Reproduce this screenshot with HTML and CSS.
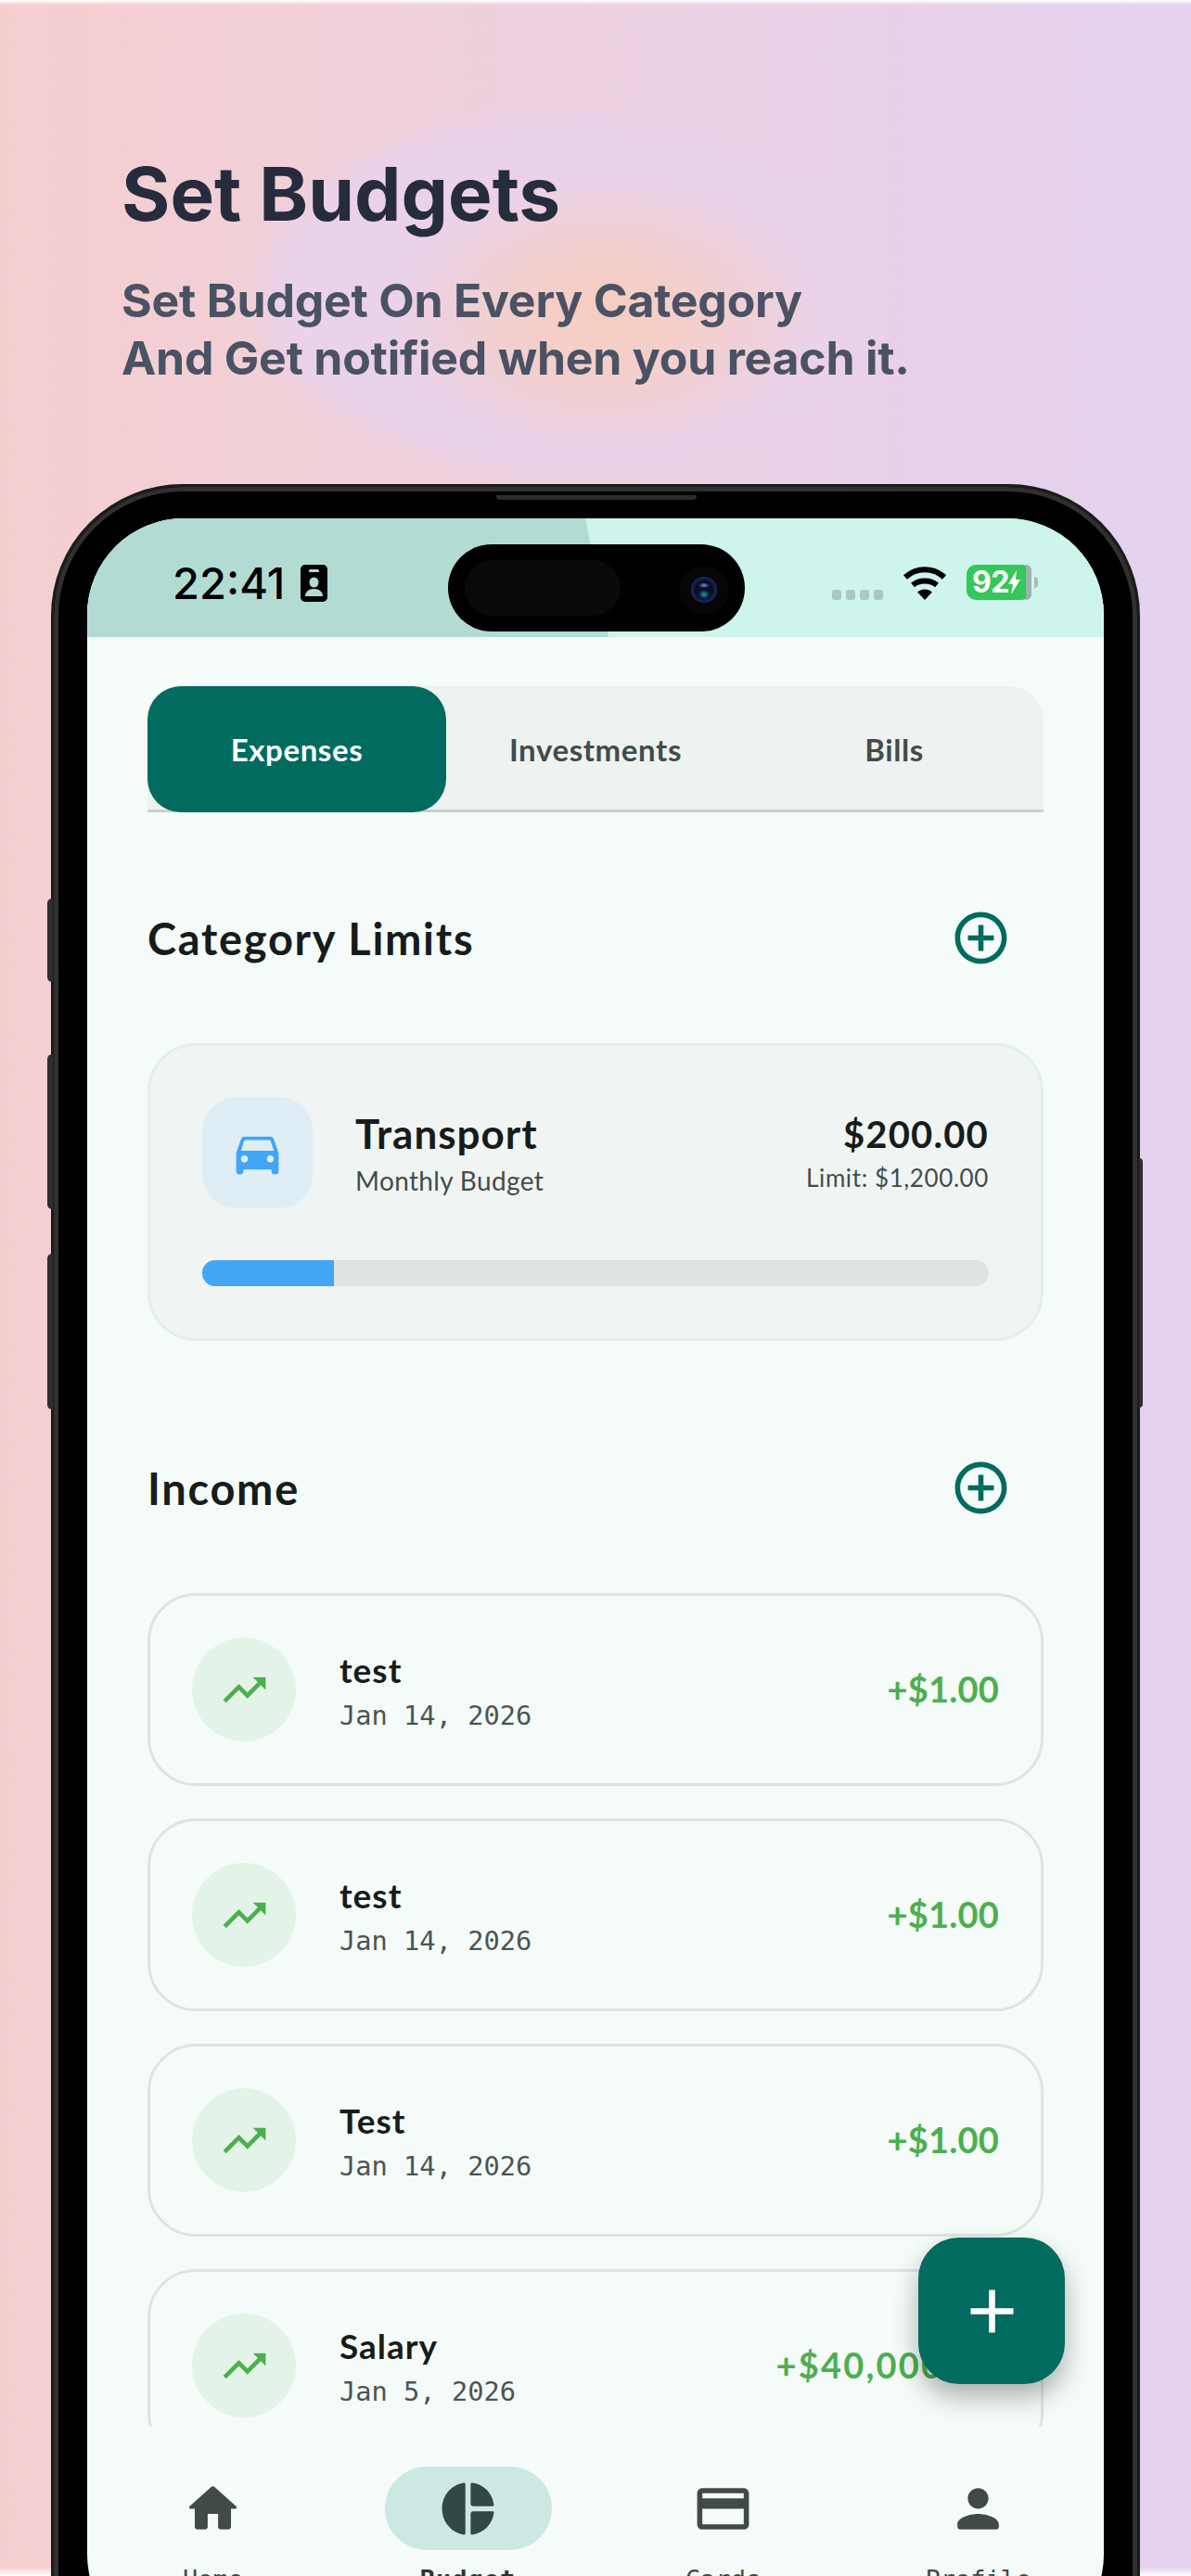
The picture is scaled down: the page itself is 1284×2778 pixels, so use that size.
FILE: index.html
```html
<!DOCTYPE html>
<html lang="en">
<head>
<meta charset="utf-8">
<title>Set Budgets</title>
<link rel="stylesheet" href="styles.css">
</head>
<body>
<div class="blob"></div>
<header class="hero">
  <h1 class="hero-title">Set Budgets</h1>
  <p class="hero-sub">Set Budget On Every Category<br>And Get notified when you reach it.</p>
</header>
<div class="phone">
  <span class="btn btn-a"></span><span class="btn btn-b"></span><span class="btn btn-c"></span><span class="btn btn-d"></span>
  <span class="speaker"></span>
  <div class="screen">
    <div class="status">
      <div class="status-shade"></div>
      <div class="status-left">
        <span class="time">22:41</span>
        <svg class="badge-ico" viewBox="0 0 29 40"><rect width="29" height="40" rx="5" fill="#000"/><rect x="9" y="5" width="11" height="3" rx="1.5" fill="#b2dbd3"/><ellipse cx="14.5" cy="19" rx="5" ry="5.5" fill="#b2dbd3"/><path d="M5 34c0-5 4-8 9.500-8s9.500 3 9.500 8z" fill="#b2dbd3"/></svg>
      </div>
      <div class="island"><span class="island-pill"></span><span class="cam"><span class="lens"></span></span></div>
      <div class="status-right">
        <span class="dots"><i></i><i></i><i></i><i></i></span>
        <svg class="wifi" viewBox="0 0 48 36"><path d="M3 11.500C15 .5 33 .5 45 11.500" fill="none" stroke="#000" stroke-width="6"/><path d="M11 20C18 14 30 14 37 20" fill="none" stroke="#000" stroke-width="6"/><path d="M16 27.500C21 23.500 27 23.500 32 27.500L24 36z" fill="#000"/></svg>
        <span class="battery"><span class="batt-text">92</span><svg class="bolt" viewBox="0 0 14 26"><path d="M9 0L0 15h5l-2 11 10-16H8z" fill="#fff"/></svg><span class="batt-end"></span><span class="batt-nub"></span></span>
      </div>
    </div>
    <main class="main">
      <nav class="tabs">
        <div class="tab tab-on">Expenses</div>
        <div class="tab">Investments</div>
        <div class="tab">Bills</div>
      </nav>
      <section class="sec-head sec-first">
        <h2 class="sec-title">Category Limits</h2>
        <svg class="plus-ico" viewBox="0 0 24 24"><path d="M13 7h-2v4H7v2h4v4h2v-4h4v-2h-4V7zm-1-5C6.480 2 2 6.480 2 12s4.480 10 10 10 10-4.480 10-10S17.520 2 12 2zm0 18c-4.410 0-8-3.590-8-8s3.590-8 8-8 8 3.590 8 8-3.590 8-8 8z"/></svg>
      </section>
      <article class="limit">
        <div class="limit-top">
          <div class="limit-ico"><svg class="car" viewBox="0 0 24 24"><path d="M18.920 6.010C18.720 5.420 18.160 5 17.500 5h-11c-.66 0-1.210.42-1.420 1.010L3 12v8c0 .55.45 1 1 1h1c.55 0 1-.45 1-1v-1h12v1c0 .55.45 1 1 1h1c.55 0 1-.45 1-1v-8l-2.080-5.990zM6.500 16c-.83 0-1.500-.67-1.500-1.500S5.670 13 6.500 13s1.500.67 1.500 1.500S7.330 16 6.500 16zm11 0c-.83 0-1.500-.67-1.500-1.500s.67-1.500 1.500-1.500 1.500.67 1.500 1.500-.67 1.500-1.500 1.500zM5 11l1.500-4.500h11L19 11H5z"/></svg></div>
          <div class="limit-info"><div class="limit-name">Transport</div><div class="limit-sub">Monthly Budget</div></div>
          <div class="limit-nums"><div class="limit-amt">$200.00</div><div class="limit-cap">Limit: $1,200.00</div></div>
        </div>
        <div class="bar"><div class="bar-fill" style="width:16.700%"></div></div>
      </article>
      <section class="sec-head sec-next">
        <h2 class="sec-title">Income</h2>
        <svg class="plus-ico" viewBox="0 0 24 24"><path d="M13 7h-2v4H7v2h4v4h2v-4h4v-2h-4V7zm-1-5C6.480 2 2 6.480 2 12s4.480 10 10 10 10-4.480 10-10S17.520 2 12 2zm0 18c-4.410 0-8-3.590-8-8s3.590-8 8-8 8 3.590 8 8-3.590 8-8 8z"/></svg>
      </section>
      <div class="rows">
        <article class="row">
          <div class="row-ico"><svg class="trend" viewBox="0 0 24 24"><path d="M16 6l2.290 2.290-4.880 4.880-4-4L2 16.590 3.410 18l6-6 4 4 6.300-6.290L22 12V6z"/></svg></div>
          <div class="row-info"><div class="row-name">test</div><div class="row-date">Jan 14, 2026</div></div>
          <div class="row-amt">+$1.00</div>
        </article>
        <article class="row">
          <div class="row-ico"><svg class="trend" viewBox="0 0 24 24"><path d="M16 6l2.290 2.290-4.880 4.880-4-4L2 16.590 3.410 18l6-6 4 4 6.300-6.290L22 12V6z"/></svg></div>
          <div class="row-info"><div class="row-name">test</div><div class="row-date">Jan 14, 2026</div></div>
          <div class="row-amt">+$1.00</div>
        </article>
        <article class="row">
          <div class="row-ico"><svg class="trend" viewBox="0 0 24 24"><path d="M16 6l2.290 2.290-4.880 4.880-4-4L2 16.590 3.410 18l6-6 4 4 6.300-6.290L22 12V6z"/></svg></div>
          <div class="row-info"><div class="row-name">Test</div><div class="row-date">Jan 14, 2026</div></div>
          <div class="row-amt">+$1.00</div>
        </article>
        <article class="row">
          <div class="row-ico"><svg class="trend" viewBox="0 0 24 24"><path d="M16 6l2.290 2.290-4.880 4.880-4-4L2 16.590 3.410 18l6-6 4 4 6.300-6.290L22 12V6z"/></svg></div>
          <div class="row-info"><div class="row-name">Salary</div><div class="row-date">Jan 5, 2026</div></div>
          <div class="row-amt row-amt-wide">+$40,000.00</div>
        </article>
      </div>
    </main>
    <button class="fab" type="button" aria-label="Add"><svg class="fab-ico" viewBox="0 0 24 24"><path d="M19 13h-6v6h-2v-6H5v-2h6V5h2v6h6v2z"/></svg></button>
    <nav class="bottom">
      <div class="nav-item"><span class="nav-slot"><svg class="nav-ico" viewBox="0 0 24 24"><path d="M10 19v-5h4v5c0 .55.45 1 1 1h3c.55 0 1-.45 1-1v-7h1.700c.46 0 .68-.57.33-.87L12.670 3.600c-.38-.34-.96-.34-1.340 0l-8.360 7.530c-.34.3-.13.87.33.87H5v7c0 .55.45 1 1 1h3c.55 0 1-.45 1-1z"/></svg></span><span class="nav-label">Home</span></div>
      <div class="nav-item nav-on"><span class="nav-slot"><svg class="nav-ico" viewBox="0 0 24 24"><path d="M11 2.500v19c0 .3-.25.55-.55.5C5.650 21.300 2 17.100 2 12s3.650-9.300 8.450-10c.3-.05.55.2.55.5zm2.030 0V10c0 .55.45 1 1 1H21.500c.3 0 .55-.25.5-.55-.5-4.500-4-8-8.420-8.450-.3-.05-.55.2-.55.5zm0 11V21.500c0 .3.25.55.55.5 4.450-.5 7.950-4 8.420-8.450.05-.3-.2-.55-.5-.55h-7.470c-.55 0-1 .45-1 1z"/></svg></span><span class="nav-label">Budget</span></div>
      <div class="nav-item"><span class="nav-slot"><svg class="nav-ico" viewBox="0 0 24 24"><path d="M20 4H4c-1.110 0-1.990.89-1.990 2L2 18c0 1.110.89 2 2 2h16c1.110 0 2-.89 2-2V6c0-1.110-.89-2-2-2zm0 14H4v-6h16v6zm0-10H4V6h16v2z"/></svg></span><span class="nav-label">Cards</span></div>
      <div class="nav-item"><span class="nav-slot"><svg class="nav-ico" viewBox="0 0 24 24"><path d="M12 12c2.210 0 4-1.790 4-4s-1.790-4-4-4-4 1.790-4 4 1.790 4 4 4zm0 2c-2.670 0-8 1.340-8 4v1c0 .55.45 1 1 1h14c.55 0 1-.45 1-1v-1c0-2.660-5.330-4-8-4z"/></svg></span><span class="nav-label">Profile</span></div>
    </nav>
  </div>
</div>
</body>
</html>
```

FILE: styles.css
```css
* { box-sizing: border-box; }
html, body { margin: 0; padding: 0; }
body {
  width: 1284px;
  height: 2778px;
  overflow: hidden;
  position: relative;
  font-family: "Lato", "Noto Sans", sans-serif;
  background:
    linear-gradient(180deg, #fff 0, rgba(255,255,255,0) 5px),
    linear-gradient(0deg, #fff 0, rgba(255,255,255,0) 10px),
    linear-gradient(90deg, #f5cfd0 0%, #e4d2f0 100%);
}
.blob {
  position: absolute;
  left: 262px;
  top: 112px;
  width: 700px;
  height: 408px;
  background:
    radial-gradient(ellipse 230px 150px at 56% 56%, #f7cdbf 0%, #f3cfcd 45%, rgba(235,210,228,0) 100%),
    radial-gradient(ellipse closest-side at 50% 50%, #ead2e8 0%, #ead2e8 88%, rgba(234,210,232,0) 100%);
}
.hero { position: relative; height: 522px; padding: 161px 0 0 131px; }
.hero-title { margin: 0; font: 700 80px/96px "Inter", sans-serif; color: #272c3c; }
.hero-sub { margin: 36px 0 0; font: 700 50px/62px "Inter", sans-serif; color: #4a5264; letter-spacing: -0.25px; }

.phone {
  position: relative;
  width: 1174px;
  height: 2400px;
  margin-left: 55px;
  border-radius: 142px;
  background: #000;
  border: 3px solid #1c1c1c;
  box-shadow: inset 0 0 0 5px #303030;
  padding: 34px 36px 0;
}
.btn { position: absolute; width: 6px; background: #2e2e2e; }
.btn-a { left: -7px; top: 444px; height: 90px; border-radius: 5px 0 0 5px; }
.btn-b { left: -7px; top: 612px; height: 167px; border-radius: 5px 0 0 5px; }
.btn-c { left: -7px; top: 827px; height: 168px; border-radius: 5px 0 0 5px; }
.btn-d { right: -6px; top: 724px; height: 269px; width: 4px; border-radius: 0 5px 5px 0; }
.speaker { position: absolute; left: 477px; top: 9px; width: 216px; height: 5px; background: #2c2c2c; border-radius: 0 0 4px 4px; }
.screen {
  position: relative;
  width: 1096px;
  height: 2300px;
  background: #f5fbf8;
  border-radius: 104px;
  overflow: hidden;
}
.status { position: relative; height: 128px; background: #cdf5ec; }
.status-shade { position: absolute; inset: 0; background: #b2dbd3; clip-path: polygon(0 0, 537px 0, 562px 128px, 0 128px); }
.status-left { position: absolute; left: 92px; top: 48px; display: flex; align-items: center; gap: 17px; }
.time { font: 500 47px/44px "Inter", sans-serif; color: #000; }
.badge-ico { width: 29px; height: 40px; }
.island { position: absolute; left: 389px; top: 28px; width: 320px; height: 94px; border-radius: 47px; background: #000; }
.island-pill { position: absolute; left: 18px; top: 17px; width: 168px; height: 60px; border-radius: 30px; background: #0a0a0a; }
.cam { position: absolute; left: 249px; top: 23px; width: 54px; height: 52px; border-radius: 50%; background: #07040a; }
.lens {
  position: absolute;
  left: 13px;
  top: 12px;
  width: 28px;
  height: 28px;
  border-radius: 50%;
  background:
    radial-gradient(6px 3px at 50% 33%, #8a86e0, transparent),
    radial-gradient(6px 5px at 50% 68%, #1c9fb0, transparent),
    radial-gradient(circle, #0a0f28 48%, #16306a 72%, #0a1024 100%);
}
.status-right { position: absolute; left: 803px; top: 50px; width: 225px; height: 38px; }
.dots { position: absolute; left: 0; top: 27px; display: flex; gap: 5px; }
.dots i { width: 10px; height: 11px; border-radius: 3px; background: #abc8c2; }
.wifi { position: absolute; left: 76px; top: 2px; width: 48px; height: 36px; }
.battery { position: absolute; left: 145px; top: 0; width: 70px; height: 38px; border-radius: 10px; background: #34c759; display: flex; align-items: center; padding-left: 6px; }
.batt-text { font: 700 32px/38px "Inter", sans-serif; color: #fff; letter-spacing: -0.5px; }
.bolt { width: 14px; height: 26px; margin-left: -1px; position: relative; z-index: 1; }
.batt-end { position: absolute; right: 0; top: 0; width: 6px; height: 38px; background: #9ab3ac; border-radius: 0 10px 10px 0; }
.batt-nub { position: absolute; right: -7px; top: 13px; width: 4px; height: 12px; background: #a6bdb7; border-radius: 0 4px 4px 0; }

.main { height: 1930px; padding: 53px 65px 0; overflow: hidden; }
.tabs { display: grid; grid-template-columns: repeat(3, 1fr); height: 136px; background: #eef3f1; border-radius: 36px 36px 0 0; border-bottom: 3px solid #c9d1ce; }
.tab { display: flex; align-items: center; justify-content: center; height: 136px; font-size: 33px; font-weight: 700; color: #434c4a; letter-spacing: .6px; }
.tab-on { background: #006b5e; color: #fff; border-radius: 36px; }

.sec-head { display: flex; justify-content: space-between; align-items: center; height: 67px; padding-right: 34px; }
.sec-first { margin-top: 102px; margin-bottom: 80px; }
.sec-next { margin-top: 125px; margin-bottom: 80px; }
.sec-title { margin: 0; font-size: 47px; font-weight: 700; color: #171c1b; letter-spacing: 1.700px; }
.plus-ico { width: 67px; height: 67px; fill: #006b5e; }

.limit { height: 321px; padding: 55px 56px 0; background: #f0f5f3; border: 3px solid #e2eff1; border-radius: 52px; }
.limit-top { display: flex; align-items: center; height: 120px; }
.limit-ico { width: 119px; height: 120px; border-radius: 36px; background: #dfeef5; display: flex; align-items: center; justify-content: center; }
.car { width: 61px; height: 61px; fill: #42a5f5; }
.limit-info { margin-left: 46px; flex: 1; }
.limit-name { font-size: 44px; line-height: 52px; font-weight: 700; color: #171c1b; letter-spacing: 1px; }
.limit-sub { font-size: 28px; line-height: 36px; color: #434c4a; margin-top: 7px; letter-spacing: .35px; }
.limit-nums { text-align: right; }
.limit-amt { font-size: 40px; line-height: 48px; font-weight: 700; color: #171c1b; letter-spacing: 1.200px; }
.limit-cap { font-size: 26px; line-height: 34px; color: #434c4a; margin-top: 6px; letter-spacing: .6px; }
.bar { margin-top: 56px; height: 28px; border-radius: 14px; background: #dfe4e2; overflow: hidden; }
.bar-fill { height: 100%; background: #42a5f5; }

.rows { display: flex; flex-direction: column; gap: 35px; }
.row { flex: none; display: flex; align-items: center; height: 208px; padding: 0 45px; border: 3px solid #dfe4e2; border-radius: 52px; }
.row-ico { flex: none; width: 112px; height: 112px; border-radius: 50%; background: #e4f3e8; display: flex; align-items: center; justify-content: center; }
.trend { width: 55px; height: 55px; fill: #4caf50; }
.row-info { margin-left: 47px; flex: 1; padding-top: 2px; }
.row-name { font-size: 37px; line-height: 46px; font-weight: 700; color: #171c1b; letter-spacing: 1px; }
.row-date { font: 400 28.700px/36px "DejaVu Sans Mono", monospace; color: #4a5552; margin-top: 8px; }
.row-amt { font-size: 38px; line-height: 42px; font-weight: 700; color: #4caf50; white-space: nowrap; margin-top: -3px; letter-spacing: .2px; }
.row-amt-wide { letter-spacing: 2.200px; }

.fab { position: absolute; left: 896px; top: 1854px; width: 158px; height: 158px; padding: 0; border: 0; border-radius: 44px; background: #006b5e; box-shadow: 0 14px 28px rgba(0,0,0,.3); display: flex; align-items: center; justify-content: center; }
.fab-ico { width: 79px; height: 79px; fill: #fff; }

.bottom { display: grid; grid-template-columns: repeat(4, 1fr); margin: 0 -2px; padding-top: 43px; }
.nav-item { display: flex; flex-direction: column; align-items: center; }
.nav-slot { width: 180px; height: 90px; border-radius: 45px; display: flex; align-items: center; justify-content: center; }
.nav-on .nav-slot { background: #cde8e2; }
.nav-ico { width: 67px; height: 67px; fill: #424a48; }
.nav-on .nav-ico { fill: #314845; }
.nav-label { font: 400 27px/36px "DejaVu Sans Mono", monospace; color: #424a48; margin-top: 14px; }
.nav-on .nav-label { font-weight: 700; color: #2a3533; letter-spacing: 1px; }
```
